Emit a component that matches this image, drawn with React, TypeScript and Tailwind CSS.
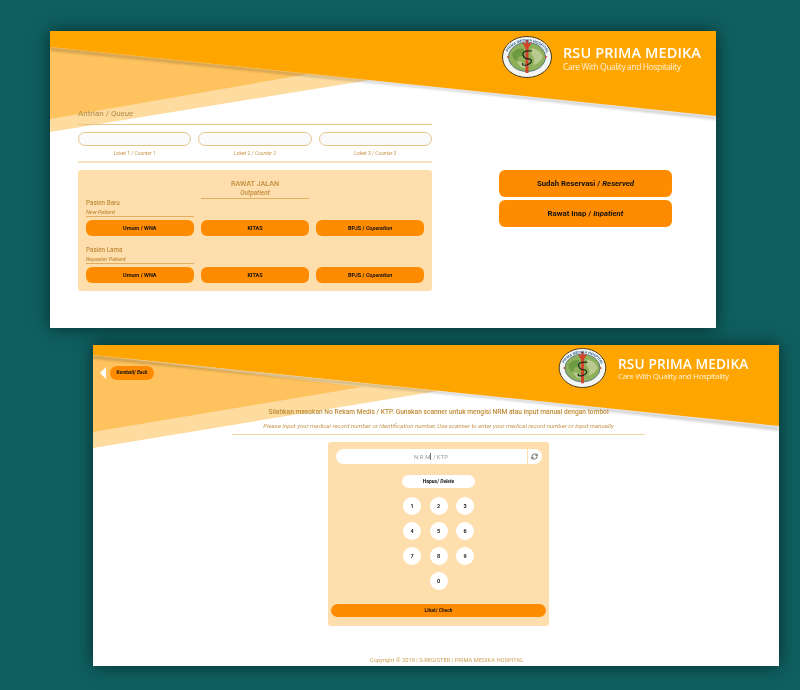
import React from 'react';
import { RefreshCw } from 'lucide-react';

const Logo: React.FC<{ id: string; className: string }> = ({ id, className }) => (
  <svg viewBox="0 0 100 84" className={className}>
    <ellipse cx="50" cy="42" rx="49" ry="41" fill="#f4f6f4" stroke="#4a3a22" strokeWidth="2" />
    <ellipse cx="50" cy="42" rx="37" ry="29" fill="#8fb05a" stroke="#3d5f7a" strokeWidth="1.5" />
    <path d="M20 36 Q30 22 44 26 L42 40 Q32 38 30 50 Q22 48 20 36 Z" fill="#6f9a44" />
    <path d="M60 24 Q78 28 82 42 Q74 56 62 58 Q68 44 58 36 Z" fill="#b9c98f" />
    <path d="M30 52 Q44 48 48 64 Q38 66 30 52 Z" fill="#b9c98f" />
    <path d="M47 8 L53 8 L52 16 L60 12 L53 24 L53 74 L47 74 L47 24 L40 12 L48 16 Z" fill="#d5402b" />
    <path d="M60 30 Q40 28 42 38 Q44 46 56 46 Q64 52 50 58 Q38 60 42 54" fill="none" stroke="#1c2a1c" strokeWidth="2.5" />
    <path d="M10 42 l4 0 M12 40 l0 4 M86 42 l4 0 M88 40 l0 4" stroke="#d5402b" strokeWidth="2" />
    <path id={id} d="M8 46 A42 35 0 0 1 92 46" fill="none" />
    <text fontFamily="'Liberation Sans', sans-serif" fontSize="7.5" fontWeight="700" fill="#2b5c8a">
      <textPath href={`#${id}`} startOffset="12%">PRIMA MEDIKA HOSPITAL</textPath>
    </text>
  </svg>
);

const OrangeButton: React.FC<{ children: React.ReactNode }> = ({ children }) => (
  <button className="h-[16px] rounded-[6px] bg-[#ff8c00] text-[5.5px] font-bold text-[#111] whitespace-nowrap">{children}</button>
);

const PatientRow: React.FC<{ title: string; sub: string }> = ({ title, sub }) => (
  <div>
    <div className="w-[108px] border-b border-[#e0b060]">
      <div className="text-[6.3px] leading-[9px] font-medium text-[#c08c3c]">{title}</div>
      <div className="text-[5.5px] leading-[8px] italic font-medium text-[#c08c3c]">{sub}</div>
    </div>
    <div className="mt-[3px] grid grid-cols-3 gap-x-[7.5px]">
      <OrangeButton>Umum / WNA</OrangeButton>
      <OrangeButton>KITAS</OrangeButton>
      <OrangeButton>BPJS / <i>Coperation</i></OrangeButton>
    </div>
  </div>
);

const Counter: React.FC<{ n: number }> = ({ n }) => (
  <div>
    <div className="h-[14px] rounded-[7px] border border-[#e6c58a] bg-[#fafafa]" />
    <div className="mt-[3px] text-center text-[5px] leading-[8px] text-[#c8964a]">
      Loket {n} / <i>Counter {n}</i>
    </div>
  </div>
);

const KeyButton: React.FC<{ label: string }> = ({ label }) => (
  <button className="block w-[18px] h-[18px] rounded-full bg-white text-[5.5px] font-bold text-[#222]">{label}</button>
);

export default function App() {
  return (
    <div className="relative w-[800px] h-[690px] overflow-hidden bg-[#0f5f60] font-['Roboto',sans-serif]">
      {/* first window */}
      <div className="absolute left-[50px] top-[31px] w-[666px] h-[297px] bg-white shadow-[0_0_16px_rgba(0,0,0,0.55)] overflow-hidden blur-[0.3px]">
        <svg viewBox="0 0 666 297" className="absolute inset-0 w-full h-full">
          <polygon points="0,16 320,49 0,101" fill="#fedc9f" />
          <polygon points="0,16 258,43 0,88" fill="#fec35f" />
          <polygon points="0,16 666,85 666,89 400,60 0,20" fill="#000" opacity="0.16" className="blur-[1px]" />
          <polygon points="0,0 666,0 666,85 0,16" fill="#ffa500" />
        </svg>
        <div className="relative flex pl-[28px] pt-[76px]">
          <div className="w-[354px]">
            <div className="text-[8px] leading-[14px] text-[#ad8a4c]">
              Antrian / <i>Queue</i>
            </div>
            <div className="mt-[3px] border-t border-[#e6c58a]" />
            <div className="mt-[7px] grid grid-cols-3 gap-x-[7px]">
              <Counter n={1} />
              <Counter n={2} />
              <Counter n={3} />
            </div>
            <div className="mt-[4px] border-t-2 border-[#f5e3c3]" />
            <div className="mt-[7px] h-[121px] rounded-[3px] bg-[#ffdead] px-[8px] pt-[8px]">
              <div className="mx-auto w-[108px] border-b border-[#e0b060] text-center text-[#c08c3c]">
                <div className="text-[7.2px] leading-[11px] font-medium">RAWAT JALAN</div>
                <div className="text-[6.5px] leading-[9px] italic font-medium">Outpatient</div>
              </div>
              <div className="flex flex-col gap-[10px]">
                <PatientRow title="Pasien Baru" sub="New Patient" />
                <PatientRow title="Pasien Lama" sub="Repeater Patient" />
              </div>
            </div>
          </div>
          <div className="ml-[67px] mt-[63px] w-[173px] flex flex-col gap-[3px]">
            <button className="h-[27px] rounded-[6px] bg-[#ff8c00] text-[7.8px] font-bold text-[#111]">Sudah Reservasi / <i>Reserved</i></button>
            <button className="h-[27px] rounded-[6px] bg-[#ff8c00] text-[7.8px] font-bold text-[#111]">Rawat Inap / <i>Inpatient</i></button>
          </div>
        </div>
        <div className="absolute left-[451px] top-[5px] flex items-center text-white">
          <Logo id="logo-a" className="w-[52px] h-[42px] mr-[10px]" />
          <div className="mt-[2px] font-['Open_Sans',sans-serif]">
            <div className="text-[14.5px] leading-[16px] font-semibold tracking-[0.1px] whitespace-nowrap">RSU PRIMA MEDIKA</div>
            <div className="text-[8.5px] leading-[11px] tracking-[-0.4px] text-[#fff1d6] whitespace-nowrap">Care With Quality and Hospitality</div>
          </div>
        </div>
      </div>

      {/* second window */}
      <div className="absolute left-[93px] top-[345px] w-[686px] h-[321px] bg-white shadow-[0_0_16px_rgba(0,0,0,0.55)] overflow-hidden blur-[0.3px]">
        <svg viewBox="0 0 686 321" className="absolute inset-0 w-full h-full">
          <polygon points="0,10 345,46 0,103" fill="#fedc9f" />
          <polygon points="0,10 269,42 0,87" fill="#fec35f" />
          <polygon points="0,10 686,81 686,86 420,56 0,14" fill="#000" opacity="0.16" className="blur-[1px]" />
          <polygon points="0,0 686,0 686,81 0,10" fill="#ffa500" />
        </svg>
        <div className="absolute left-[465px] top-[3px] flex items-center text-white">
          <Logo id="logo-b" className="w-[49px] h-[40px] mr-[11px]" />
          <div className="mt-[1px] font-['Open_Sans',sans-serif]">
            <div className="text-[13.7px] leading-[14px] font-semibold tracking-[0.1px] whitespace-nowrap">RSU PRIMA MEDIKA</div>
            <div className="text-[8px] leading-[10px] tracking-[-0.38px] text-[#fff1d6] whitespace-nowrap">Care With Quality and Hospitality</div>
          </div>
        </div>
        <div className="relative flex flex-col items-center h-full pl-[5px]">
          <div className="self-start ml-[2px] mt-[21px] flex items-center gap-[4px]">
            <svg viewBox="0 0 6 12" className="w-[6px] h-[12px]">
              <polygon points="6,0 6,12 0,6" fill="#fff" />
            </svg>
            <button className="w-[44px] h-[14px] rounded-[7px] bg-[#ff8c00] text-[4.8px] font-bold text-[#111] whitespace-nowrap">Kembali/ <i>Back</i></button>
          </div>
          <div className="mt-[26px] text-[6.65px] leading-[12px] font-medium text-[#bf8a35] whitespace-nowrap">
            Silahkan masukan No Rekam Medis / KTP. Gunakan scanner untuk mengisi NRM atau input manual dengan tombol
          </div>
          <div className="mt-[3px] text-[6.1px] leading-[10px] italic text-[#c4974e] whitespace-nowrap">
            Please input your medical record number or identification number, Use scanner to enter your medical record number or input manually
          </div>
          <div className="mt-[3px] w-[413px] border-t border-[#f1d8a8]" />
          <div className="mt-[7px] w-[221px] h-[184px] rounded-[3px] bg-[#ffdead] flex flex-col items-center pt-[7px]">
            <div className="flex w-[206px] h-[15px]">
              <div className="flex-1 rounded-l-[7.5px] bg-white text-center text-[6px] leading-[15px] text-[#999]">
                N.R.M<span className="border-l border-[#777]" /> / KTP
              </div>
              <div className="ml-px w-[14px] rounded-r-[7.5px] bg-white flex items-center justify-center">
                <RefreshCw size={7} strokeWidth={2.5} className="text-[#444]" />
              </div>
            </div>
            <button className="mt-[11px] w-[73px] h-[13px] rounded-[6.5px] bg-white text-[5px] font-bold text-[#111]">Hapus/ <i>Delete</i></button>
            <div className="mt-[9px] grid grid-cols-3 gap-x-[8.5px] gap-y-[7px]">
              {['1', '2', '3', '4', '5', '6', '7', '8', '9'].map(k => (
                <KeyButton key={k} label={k} />
              ))}
              <div className="col-start-2">
                <KeyButton label="0" />
              </div>
            </div>
            <button className="mt-[14px] w-[215px] h-[13px] rounded-[6.5px] bg-[#ff8c00] text-[5px] font-bold text-[#111]">Lihat/ <i>Check</i></button>
          </div>
          <div className="mt-[30px] translate-x-[8px] text-[5.8px] leading-[9px] text-[#cfa35c] whitespace-nowrap">
            Copyright © 2018 | S-REGISTER | PRIMA MEDIKA HOSPITAL
          </div>
        </div>
      </div>
    </div>
  );
}
